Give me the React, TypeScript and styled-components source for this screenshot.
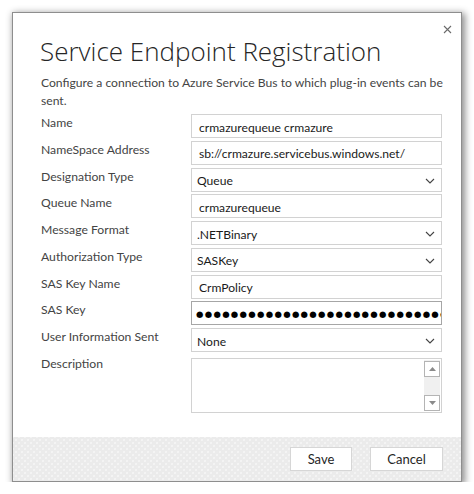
import React from "react";
import styled, { createGlobalStyle } from "styled-components";

const Global = createGlobalStyle`
  html, body { margin: 0; padding: 0; background: #ffffff; }
  body { font-family: Lato, "Open Sans", sans-serif; }
  * { box-sizing: border-box; }
`;

const Page = styled.div`
  padding: 12px 0 0 12px;
`;

const Dialog = styled.div`
  width: 450px;
  height: 470px;
  background: #ffffff;
  border: 1px solid #8e8e8e;
  box-shadow: 2px 2px 7px 1px rgba(0, 0, 0, 0.45);
  display: flex;
  flex-direction: column;
  position: relative;
`;

const Close = styled.button`
  position: absolute;
  top: 8px;
  right: 6px;
  width: 16px;
  height: 16px;
  padding: 0;
  border: 0;
  background: transparent;
  display: flex;
  align-items: center;
  justify-content: center;
`;

const Body = styled.div`
  padding: 21px 19px 0 27px;
  flex: 1;
`;

const Title = styled.h1`
  margin: 0;
  font-family: "Open Sans", "Noto Sans", sans-serif;
  font-weight: 300;
  font-size: 26px;
  line-height: 35px;
  color: #262626;
`;

const Intro = styled.p`
  margin: 5px 0 4px 1px;
  font-size: 12.15px;
  line-height: 18px;
  color: #444444;
  white-space: nowrap;
`;

const Form = styled.div`
  display: grid;
  grid-template-columns: 150px 251px;
  row-gap: 2.75px;
  padding-left: 1px;
`;

const Label = styled.div`
  font-size: 12.2px;
  line-height: 16px;
  color: #444444;
  padding-top: 1px;
`;

const Field = styled.div<{ $focus?: boolean }>`
  height: 24px;
  border: 1px solid ${(p) => (p.$focus ? "#a6a6a6" : "#d2d2d2")};
  background: #ffffff;
  display: flex;
  align-items: center;
  padding: 2px 7px 0 7px;
  font-size: 12.1px;
  color: #1a1a1a;
  overflow: hidden;
  white-space: nowrap;
`;

const SelectBox = styled(Field)`
  padding-left: 5px;
  padding-right: 6px;
  justify-content: space-between;
`;

const Dots = styled.span`
  font-family: "DejaVu Sans", sans-serif;
  font-size: 8.5px;
  letter-spacing: 1.3px;
  color: #000;
  margin-left: -3px;
`;

const AreaBox = styled.div`
  height: 55px;
  margin-top: 3px;
  border: 1px solid #d2d2d2;
  display: flex;
  justify-content: flex-end;
  padding: 1px;
`;

const ScrollCol = styled.div`
  width: 16px;
  display: flex;
  flex-direction: column;
  justify-content: space-between;
  background: #f0f0f0;
  padding-top: 1px;
`;

const ScrollBtn = styled.div`
  height: 16px;
  border: 1px solid #b4b4b4;
  background: #ffffff;
  display: flex;
  align-items: center;
  justify-content: center;
`;

const Footer = styled.div`
  height: 44px;
  display: flex;
  justify-content: flex-end;
  align-items: center;
  gap: 18px;
  padding-right: 18px;
  background-color: #ebebeb;
  background-image: radial-gradient(circle, #f8f8f8 0.6px, transparent 0.9px),
    radial-gradient(circle, #f8f8f8 0.6px, transparent 0.9px);
  background-size: 6px 6px;
  background-position: 0 0, 3px 3px;
`;

const Button = styled.button<{ $w: number }>`
  width: ${(p) => p.$w}px;
  height: 24px;
  background: #ffffff;
  border: 1px solid #d6d6d6;
  font-family: Lato, "Open Sans", sans-serif;
  font-size: 13px;
  color: #262626;
  padding: 0;
`;

const Chevron = () => (
  <svg width="10" height="6" viewBox="0 0 10 6">
    <polyline points="1,1 5,5 9,1" fill="none" stroke="#444" strokeWidth="1.1" />
  </svg>
);

const Select = ({ value }: { value: string }) => (
  <SelectBox>
    <span>{value}</span>
    <Chevron />
  </SelectBox>
);

export default function App() {
  return (
    <>
      <Global />
      <Page>
        <Dialog>
          <Close aria-label="close">
            <svg width="9" height="9" viewBox="0 0 9 9">
              <path d="M1 1 L8 8 M8 1 L1 8" stroke="#6a6a6a" strokeWidth="1.1" />
            </svg>
          </Close>
          <Body>
            <Title>Service Endpoint Registration</Title>
            <Intro>
              Configure a connection to Azure Service Bus to which plug-in events can be
              <br />
              sent.
            </Intro>
            <Form>
              <Label>Name</Label>
              <Field>crmazurequeue crmazure</Field>
              <Label>NameSpace Address</Label>
              <Field>sb://crmazure.servicebus.windows.net/</Field>
              <Label>Designation Type</Label>
              <Select value="Queue" />
              <Label>Queue Name</Label>
              <Field>crmazurequeue</Field>
              <Label>Message Format</Label>
              <Select value=".NETBinary" />
              <Label>Authorization Type</Label>
              <Select value="SASKey" />
              <Label>SAS Key Name</Label>
              <Field>CrmPolicy</Field>
              <Label>SAS Key</Label>
              <Field $focus>
                <Dots>{"●".repeat(40)}</Dots>
              </Field>
              <Label>User Information Sent</Label>
              <Select value="None" />
              <Label>Description</Label>
              <AreaBox>
                <ScrollCol>
                  <ScrollBtn>
                    <svg width="7" height="4" viewBox="0 0 7 4">
                      <polygon points="0,4 7,4 3.5,0" fill="#8a8a8a" />
                    </svg>
                  </ScrollBtn>
                  <ScrollBtn>
                    <svg width="7" height="4" viewBox="0 0 7 4">
                      <polygon points="0,0 7,0 3.5,4" fill="#8a8a8a" />
                    </svg>
                  </ScrollBtn>
                </ScrollCol>
              </AreaBox>
            </Form>
          </Body>
          <Footer>
            <Button $w={62}>Save</Button>
            <Button $w={73}>Cancel</Button>
          </Footer>
        </Dialog>
      </Page>
    </>
  );
}
